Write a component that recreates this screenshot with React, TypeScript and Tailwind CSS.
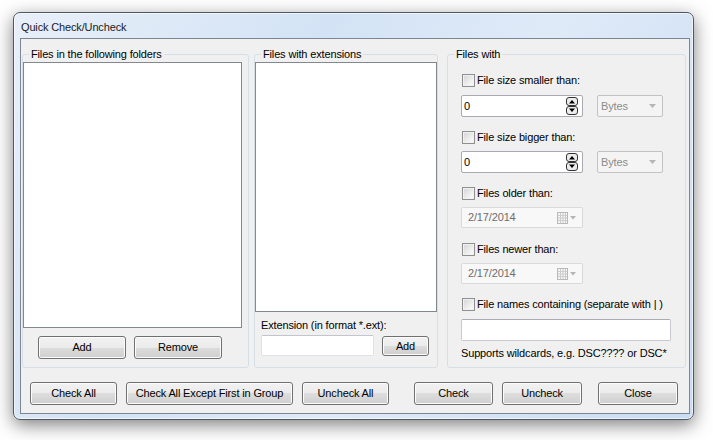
import React from 'react';

function Button({ label, className = '' }: { label: string; className?: string }) {
  return (
    <div
      className={`h-[23px] flex items-center justify-center rounded-[3px] border border-[#707070] bg-[linear-gradient(#f2f2f2_0%,#ebebeb_50%,#dddddd_50%,#cfcfcf_100%)] shadow-[inset_0_0_0_1px_#fcfcfc] text-black ${className}`}
    >
      {label}
    </div>
  );
}

function CheckRow({ label, className = '' }: { label: string; className?: string }) {
  return (
    <div className={`flex items-center h-[13px] ${className}`}>
      <div className="ml-[14px] w-[13px] h-[13px] border border-[#8e8f8f] bg-[linear-gradient(135deg,#d4d4d4,#f7f7f7_80%)] shadow-[inset_0_0_0_1px_#f1f1f1]"></div>
      <span className="ml-[2px] leading-[13px]">{label}</span>
    </div>
  );
}

function SpinRow({ className = '' }: { className?: string }) {
  return (
    <div className={`flex items-center ${className}`}>
      <div className="ml-[13px] w-[122px] h-[22px] bg-white border border-[#a9abb0] rounded-[2px] flex items-center pl-[2px] pr-[4px]">
        <span className="flex-1 leading-[13px]">0</span>
        <svg width="12" height="18" viewBox="0 0 12 18">
          <rect x="0.5" y="0.5" width="11" height="8" rx="2.5" fill="#ececec" stroke="#333" />
          <rect x="0.5" y="9.5" width="11" height="8" rx="2.5" fill="#ececec" stroke="#333" />
          <path d="M3 6.5 L6 3 L9 6.5 Z" fill="#000" />
          <path d="M3 11.5 L6 15 L9 11.5 Z" fill="#000" />
        </svg>
      </div>
      <div className="ml-[14px] w-[66px] h-[22px] border border-[#c3c3c3] rounded-[2px] bg-[#f4f4f4] flex items-center pl-[3px] pr-[6px] text-[#8c8c8c]">
        <span className="flex-1 leading-[13px]">Bytes</span>
        <svg width="7" height="4" viewBox="0 0 7 4">
          <path d="M0 0 H7 L3.5 4 Z" fill="#b5b5b5" />
        </svg>
      </div>
    </div>
  );
}

function DateRow({ className = '' }: { className?: string }) {
  return (
    <div className={`ml-[13px] w-[122px] h-[21px] border border-[#dadada] rounded-[2px] bg-[#f8f8f8] flex items-center pl-[6px] pr-[5px] text-[#6d6d6d] ${className}`}>
      <span className="flex-1 leading-[13px]">2/17/2014</span>
      <svg width="20" height="12" viewBox="0 0 20 12">
        <rect x="0.5" y="0.5" width="10" height="11" fill="#f4f4f4" stroke="#b9b9b9" />
        <path d="M1 3.5 H10 M1 6 H10 M1 8.5 H10 M3.5 1 V11 M6 1 V11 M8.5 1 V11" stroke="#cdcdcd" strokeWidth="1" />
        <path d="M13 4 H19 L16 7.5 Z" fill="#b5b5b5" />
      </svg>
    </div>
  );
}

function Group({ title, className = '', children }: { title: string; className?: string; children: React.ReactNode }) {
  return (
    <div className={`relative h-[314px] border border-[#d5dfe5] rounded-[3px] flex flex-col ${className}`}>
      <span className="absolute left-[6px] top-[-7px] px-[2px] bg-[#f0f0f0] leading-[13px]">{title}</span>
      {children}
    </div>
  );
}

export default function App() {
  return (
    <div className="w-[713px] h-[440px] bg-white overflow-hidden pt-[12px] pl-[13px] font-['Liberation_Sans',Arial,sans-serif] text-[11px] tracking-[-0.15px]">
      <div className="w-[681px] h-[408px] rounded-[7px] border border-[#4e5864] bg-[linear-gradient(120deg,#e8eff9_0%,#d3e3f5_35%,#dfeaf8_60%,#c9dcf2_100%)] shadow-[0_5px_18px_rgba(0,0,0,0.5),inset_0_0_0_1px_rgba(255,255,255,0.6)] flex flex-col">
        <div className="h-[25px] pl-[7px] pt-[3px] flex items-center text-[#1b1b1b] leading-none">Quick Check/Uncheck</div>
        <div className="ml-[6px] w-[670px] h-[376px] border border-[#7d8793] bg-[#f0f0f0] text-black flex flex-col">
          <div className="flex mt-[15px]">
            {/* Folders */}
            <Group title="Files in the following folders" className="ml-[1px] w-[227px]">
              <div className="mt-[7px] w-[219px] h-[266px] bg-white border border-[#828790]"></div>
              <div className="flex mt-[8px] ml-[15px] gap-[8px]">
                <Button label="Add" className="w-[88px]" />
                <Button label="Remove" className="w-[88px]" />
              </div>
            </Group>

            {/* Extensions */}
            <Group title="Files with extensions" className="ml-[5px] w-[184px]">
              <div className="mt-[7px] w-[182px] h-[250px] bg-white border border-[#828790]"></div>
              <div className="mt-[7px] ml-[6px] leading-[13px]">Extension (in format *.ext):</div>
              <div className="flex items-start mt-[3px] ml-[6px]">
                <div className="w-[113px] h-[21px] bg-white border border-[#dfe2e8] border-t-[#c2c5cc] rounded-[2px]"></div>
                <Button label="Add" className="ml-[8px] mt-[1px] w-[47px] !h-[20px]" />
              </div>
            </Group>

            {/* Files with */}
            <Group title="Files with" className="ml-[9px] w-[239px]">
              <CheckRow label="File size smaller than:" className="mt-[19px]" />
              <SpinRow className="mt-[8px]" />
              <CheckRow label="File size bigger than:" className="mt-[14px]" />
              <SpinRow className="mt-[7px]" />
              <CheckRow label="Files older than:" className="mt-[14px]" />
              <DateRow className="mt-[7px]" />
              <CheckRow label="Files newer than:" className="mt-[15px]" />
              <DateRow className="mt-[7px]" />
              <CheckRow label="File names containing (separate with | )" className="mt-[14px]" />
              <div className="mt-[8px] ml-[13px] w-[210px] h-[22px] bg-white border border-[#c7cad0] border-t-[#abadb3] rounded-[2px]"></div>
              <div className="mt-[6px] ml-[13px] leading-[13px]">Supports wildcards, e.g. DSC???? or DSC*</div>
            </Group>
          </div>

          <div className="flex mt-[14px] ml-[9px]">
            <Button label="Check All" className="w-[87px]" />
            <Button label="Check All Except First in Group" className="ml-[9px] w-[167px]" />
            <Button label="Uncheck All" className="ml-[9px] w-[87px]" />
            <Button label="Check" className="ml-[25px] w-[79px]" />
            <Button label="Uncheck" className="ml-[9px] w-[80px]" />
            <Button label="Close" className="ml-[16px] w-[80px]" />
          </div>
        </div>
      </div>
    </div>
  );
}
